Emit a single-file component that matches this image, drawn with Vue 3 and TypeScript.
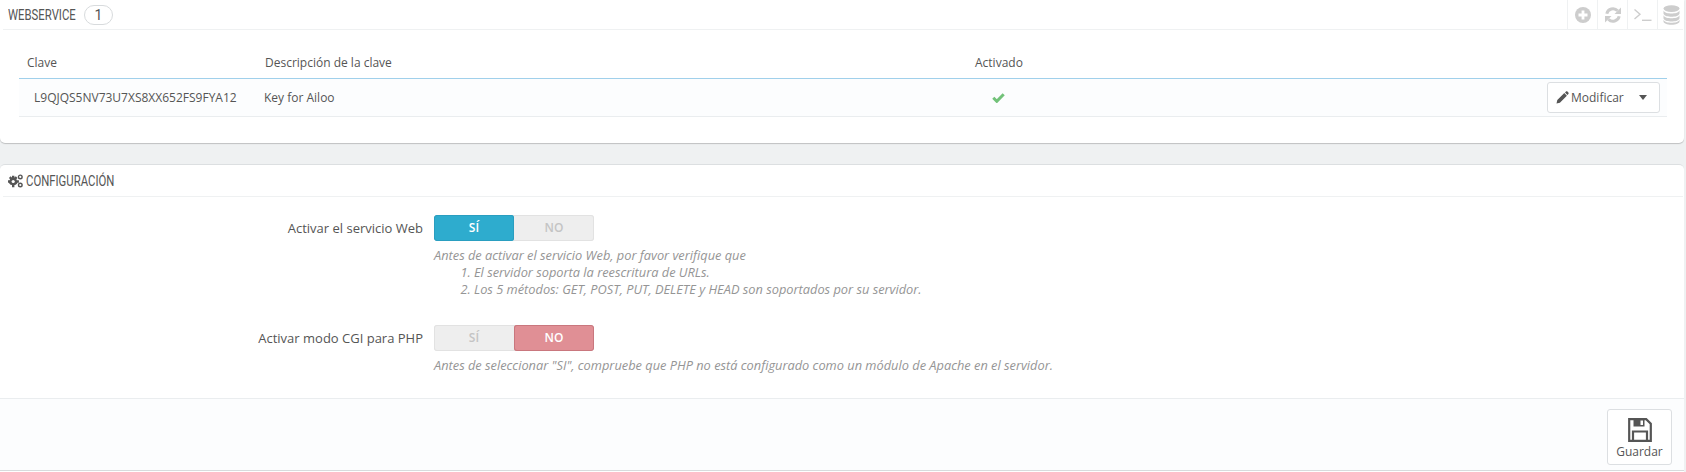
<script setup lang="ts">
const columns: string[] = ['Clave', 'Descripción de la clave', 'Activado']
</script>

<template>
  <div class="page">
    <section class="panel first">
      <header class="head">
        <div class="title-box title-web"><h3 class="title">WEBSERVICE</h3></div>
        <span class="badge">1</span>
        <div class="tools">
          <span class="tool">
            <svg width="16" height="16" viewBox="0 0 16 16"><circle cx="8" cy="8" r="8" fill="#cdcdcd"/><path d="M8 3.500v9M3.500 8h9" stroke="#fff" stroke-width="2.800"/></svg>
          </span>
          <span class="tool">
            <svg width="16" height="16" viewBox="0 0 16 16" fill="none"><path d="M1.800 6.700A6.300 6.300 0 0 1 12.600 3.800" stroke="#cdcdcd" stroke-width="3"/><path d="M16 .5v6.500H9.500z" fill="#cdcdcd"/><path d="M14.200 9.300A6.300 6.300 0 0 1 3.400 12.200" stroke="#cdcdcd" stroke-width="3"/><path d="M0 15.500V9h6.500z" fill="#cdcdcd"/></svg>
          </span>
          <span class="tool">
            <svg width="18" height="12" viewBox="0 0 18 12" fill="none"><path d="M.5.500l5.500 4.700L.5 10" stroke="#cdcdcd" stroke-width="1.400"/><path d="M8 11.300h9.500" stroke="#cdcdcd" stroke-width="1.400"/></svg>
          </span>
          <span class="tool last">
            <svg width="17" height="20" viewBox="0 0 17 20"><g fill="#cdcdcd"><ellipse cx="8.500" cy="3.600" rx="8" ry="3.400"/><path d="M.5 5.600c1 2.400 4.700 3 8 3s7-.6 8-3v3.200c-1 2.400-4.700 3-8 3s-7-.6-8-3z"/><path d="M.5 10.200c1 2.400 4.700 3 8 3s7-.6 8-3v3.200c-1 2.400-4.700 3-8 3s-7-.6-8-3z"/><path d="M.5 14.800c1 2.400 4.700 3 8 3s7-.6 8-3v1.800c0 1.900-3.600 3.200-8 3.200s-8-1.300-8-3.200z"/></g></svg>
          </span>
        </div>
      </header>
      <div class="table-wrap">
        <div class="thead">
          <span class="c1">{{ columns[0] }}</span>
          <span class="c2">{{ columns[1] }}</span>
          <span class="c3">{{ columns[2] }}</span>
        </div>
        <div class="row">
          <span class="c1 key">L9QJQS5NV73U7XS8XX652FS9FYA12</span>
          <span class="c2 desc">Key for Ailoo</span>
          <span class="c3 check">
            <svg width="13" height="10" viewBox="0 0 13 10"><path d="M1.300 4.800l3.500 3.500 6.900-7" fill="none" stroke="#72c279" stroke-width="3"/></svg>
          </span>
          <button class="modify" type="button">
            <svg width="13" height="13" viewBox="0 0 13 13"><path d="M.5 12.500l.8-3.400 7-7 2.600 2.600-7 7zM9 1.600 10 .6c.4-.4 1-.4 1.400 0l1 1c.4.4.4 1 0 1.400l-1 1z" fill="#555"/></svg>
            <span>Modificar</span>
            <i class="caret"></i>
          </button>
        </div>
      </div>
    </section>

    <section class="panel second">
      <header class="head">
        <svg class="gears" width="15" height="14" viewBox="0 0 15 14">
          <g fill="#555">
            <circle cx="5.200" cy="7.500" r="3.700"/>
            <path d="M4 1.800h2.400v11.400H4zM-.5 6.300h11.400v2.400H-.5zM.9 3.900l1.700-1.700 6.900 6.900-1.700 1.700zM7.800 2.200l1.700 1.700-6.900 6.900-1.700-1.700z"/>
          </g>
          <circle cx="5.200" cy="7.500" r="1.600" fill="#fff"/>
          <circle cx="12.300" cy="2.900" r="1.800" fill="none" stroke="#555" stroke-width="1.400"/>
          <circle cx="12.300" cy="11" r="1.800" fill="none" stroke="#555" stroke-width="1.400"/>
        </svg>
        <div class="title-box title-conf"><h3 class="title">CONFIGURACIÓN</h3></div>
      </header>

      <div class="form">
        <div class="field">
          <label class="label">Activar el servicio Web</label>
          <div class="control">
            <div class="switch">
              <span class="opt on-yes">SÍ</span>
              <span class="opt off">NO</span>
            </div>
            <div class="help help-one">
              <p>Antes de activar el servicio Web, por favor verifique que</p>
              <ol>
                <li>El servidor soporta la reescritura de URLs.</li>
                <li>Los 5 métodos: GET, POST, PUT, DELETE y HEAD son soportados por su servidor.</li>
              </ol>
            </div>
          </div>
        </div>
        <div class="field">
          <label class="label">Activar modo CGI para PHP</label>
          <div class="control">
            <div class="switch">
              <span class="opt off">SÍ</span>
              <span class="opt on-no">NO</span>
            </div>
            <div class="help">
              <p>Antes de seleccionar "SI", compruebe que PHP no está configurado como un módulo de Apache en el servidor.</p>
            </div>
          </div>
        </div>
      </div>

      <footer class="foot">
        <button class="save" type="button">
          <svg width="24" height="24" viewBox="0 0 24 24" fill="none">
            <path d="M1.200 1.200h17l4.600 4.600v17H1.200z" stroke="#555" stroke-width="2.200"/>
            <path d="M5.500 1.500h11v7h-11z" fill="#555"/>
            <path d="M12.500 2.500h2.500v4.500h-2.500z" fill="#fff"/>
            <path d="M5 13.500h14V23H5z" stroke="#555" stroke-width="2.200"/>
          </svg>
          <span>Guardar</span>
        </button>
      </footer>
    </section>
  </div>
</template>

<style>
html, body { margin: 0; background: #eff1f2; }
</style>

<style scoped>
.page {
  width: 1686px;
  height: 472px;
  overflow: hidden;
  box-sizing: border-box;
  padding-right: 2px;
  font-family: "Open Sans", sans-serif;
  font-size: 12px;
  color: #555;
}
.panel {
  background: #fff;
  box-sizing: border-box;
}
.first {
  height: 143px;
  margin-bottom: 21px;
  border-radius: 0 0 5px 5px;
  box-shadow: 0 1px 1px rgba(0, 0, 0, 0.2);
}
.second {
  height: 308px;
  border-top: 1px solid #dcdfe1;
  border-radius: 5px 5px 0 0;
  display: flex;
  flex-direction: column;
}
.head {
  height: 29px;
  margin: 0 1px 0 3px;
  display: flex;
  align-items: center;
  border-bottom: 1px solid #eff1f2;
  box-sizing: content-box;
}
.second .head { height: 31px; flex-shrink: 0; }
.title-box { overflow: visible; white-space: nowrap; }
.title-web { margin-left: 5px; width: 67px; }
.title-conf { margin-left: 3px; width: 87px; }
.gears { margin-left: 5px; }
.title {
  margin: 0;
  font-family: Roboto, sans-serif;
  font-weight: 400;
  font-size: 14px;
  color: #555;
  transform: scaleX(0.81);
  transform-origin: left center;
}
.badge {
  margin-left: 9px;
  width: 29px;
  height: 20px;
  box-sizing: border-box;
  border: 1px solid #d8dbdd;
  border-radius: 10px;
  text-align: center;
  font-family: Roboto, sans-serif;
  font-size: 14px;
  line-height: 18px;
}
.tools { margin-left: auto; display: flex; height: 100%; }
.tool {
  width: 30px;
  height: 29px;
  border-left: 1px solid #eff1f2;
  box-sizing: border-box;
  display: flex;
  align-items: center;
  justify-content: center;
}
.tool.last { width: 26px; padding-left: 1px; }
.table-wrap { margin: 16px 17px 0 19px; }
.thead {
  height: 33px;
  display: flex;
  align-items: center;
  border-bottom: 1px solid #a0d0eb;
  box-sizing: border-box;
}
.row {
  height: 38px;
  display: flex;
  align-items: center;
  background: #fcfdfe;
  border-bottom: 1px solid #eaedef;
  box-sizing: border-box;
}
.c1 { width: 246px; padding-left: 8px; box-sizing: border-box; }
.c2 { width: 710px; }
.c3 { width: 60px; }
.key { padding-left: 15px; white-space: nowrap; }
.desc { margin-left: -1px; margin-right: 1px; }
.check { display: flex; justify-content: center; width: 46px; }
.modify {
  margin-left: auto;
  margin-right: 7px;
  width: 113px;
  height: 31px;
  display: flex;
  align-items: center;
  background: #fff;
  border: 1px solid #dcdfe2;
  border-radius: 3px;
  padding: 0 0 0 8px;
  font: inherit;
  color: #555;
  box-sizing: border-box;
}
.modify span { margin-left: 2px; }
.caret {
  margin-left: 15px;
  width: 0;
  height: 0;
  border-top: 5px solid #555;
  border-left: 4.500px solid transparent;
  border-right: 4.500px solid transparent;
}
.form { flex: 1; min-height: 0; padding-top: 18px; }
.field { display: flex; }
.field + .field { margin-top: 27px; }
.label {
  width: 423px;
  text-align: right;
  line-height: 26px;
  padding-right: 11px;
  font-size: 13px;
  box-sizing: content-box;
}
.control { flex: 1; }
.switch {
  width: 160px;
  height: 26px;
  display: flex;
  background: #eee;
  border-radius: 3px;
  font-weight: 600;
  overflow: hidden;
  box-shadow: inset 0 0 0 1px #e2e2e2;
}
.opt {
  width: 80px;
  text-align: center;
  line-height: 26px;
  box-sizing: border-box;
}
.on-yes { background: #2eacce; color: #fff; border-radius: 3px; box-shadow: inset 0 0 0 1px #2a9ec0; }
.on-no { background: #e08f95; color: #fff; border-radius: 3px; box-shadow: inset 0 0 0 1px #c9777e; }
.off { color: #c4c4c4; }
.help {
  margin-top: 6px;
  font-style: italic;
  color: #959595;
  font-size: 12.800px;
  line-height: 17px;
}
.help p { margin: 0; }
.help ol { margin: 0; padding: 0 0 0 40px; }
.help-one { min-height: 51px; }
.foot {
  height: 73px;
  flex-shrink: 0;
  margin-bottom: 1px;
  background: #fcfdfe;
  border-top: 1px solid #eaedef;
  border-bottom: 1px solid #d8dbdd;
  box-sizing: border-box;
  display: flex;
  justify-content: flex-end;
  align-items: flex-start;
  padding: 10px 12px 0 0;
}
.save {
  width: 65px;
  height: 56px;
  background: #fff;
  border: 1px solid #dcdfe2;
  border-radius: 3px;
  display: flex;
  flex-direction: column;
  align-items: center;
  padding: 8px 0 0;
  box-sizing: border-box;
  font: inherit;
  color: #555;
  line-height: 17px;
}
.save span { margin-top: 1px; }
</style>
